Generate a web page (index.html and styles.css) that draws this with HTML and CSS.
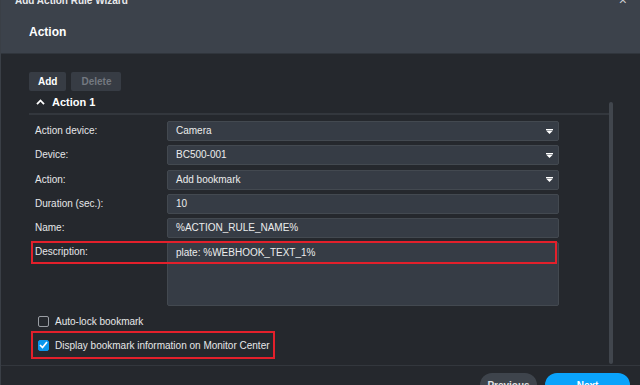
FILE: index.html
```html
<!DOCTYPE html>
<html lang="en">
<head>
  <meta charset="UTF-8">
  <meta name="viewport" content="width=device-width, initial-scale=1.0">
  <title>Add Action Rule Wizard</title>
  <link rel="stylesheet" href="styles.css">
</head>
<body>

  <div class="wizard">
    <div class="titlebar">
      <span>Add Action Rule Wizard</span>
      <span class="close">&times;</span>
    </div>

    <div class="step-head">Action</div>

    <div class="content">
      <div class="main">
        <div class="toolbar">
          <button class="btn">Add</button>
          <button class="btn disabled">Delete</button>
        </div>

        <div class="section-head">
          <svg class="chevron" width="9" height="6" viewBox="0 0 9 6">
            <polyline points="1,5.2 4.5,1.5 8,5.2" fill="none" stroke="#ffffff" stroke-width="1.8"/>
          </svg>
          <span>Action 1</span>
        </div>

        <div class="form">
          <div class="row">
            <label>Action device:</label>
            <div class="field select">Camera<svg class="caret" width="7" height="5" viewBox="0 0 7 5"><rect x="0" y="0" width="7" height="1" fill="#fff"/><polygon points="0,1.5 7,1.5 3.5,5" fill="#fff"/></svg></div>
          </div>
          <div class="row">
            <label>Device:</label>
            <div class="field select">BC500-001<svg class="caret" width="7" height="5" viewBox="0 0 7 5"><rect x="0" y="0" width="7" height="1" fill="#fff"/><polygon points="0,1.5 7,1.5 3.5,5" fill="#fff"/></svg></div>
          </div>
          <div class="row">
            <label>Action:</label>
            <div class="field select">Add bookmark<svg class="caret" width="7" height="5" viewBox="0 0 7 5"><rect x="0" y="0" width="7" height="1" fill="#fff"/><polygon points="0,1.5 7,1.5 3.5,5" fill="#fff"/></svg></div>
          </div>
          <div class="row">
            <label>Duration (sec.):</label>
            <div class="field">10</div>
          </div>
          <div class="row">
            <label>Name:</label>
            <div class="field">%ACTION_RULE_NAME%</div>
          </div>
          <div class="row">
            <label>Description:</label>
            <div class="field textarea">plate: %WEBHOOK_TEXT_1%</div>
            <div class="highlight"></div>
          </div>
        </div>

        <div class="check-row">
          <span class="checkbox"></span>
          <span>Auto-lock bookmark</span>
        </div>
        <div class="check-row boxed">
          <span class="checkbox checked">
            <svg width="9" height="8" viewBox="0 0 9 8"><polyline points="1,4 3.5,6.5 8,1" fill="none" stroke="#fff" stroke-width="1.7"/></svg>
          </span>
          <span>Display bookmark information on Monitor Center</span>
        </div>
      </div>
      <div class="scrollbar"></div>
    </div>

    <div class="footer">
      <button class="pill">Previous</button>
      <button class="pill primary">Next</button>
    </div>
  </div>

</body>
</html>
```

FILE: styles.css
```css
* {
  margin: 0;
  padding: 0;
  box-sizing: border-box;
}

body, html {
  height: 100%;
  overflow: hidden;
  background-color: #25282d;
  font-family: 'Liberation Sans', Arial, sans-serif;
  color: #e6e7e9;
}

.wizard {
  width: 640px;
  margin-top: -10px;
  display: flex;
  flex-direction: column;
  border-left: 1px solid #3a3f46;
}

.wizard > * {
  flex-shrink: 0;
}

.titlebar {
  height: 20px;
  background-color: #3c424b;
  display: flex;
  justify-content: space-between;
  align-items: center;
  padding: 0 13px 0 14px;
  font-size: 10px;
  font-weight: bold;
  color: #e8e9eb;
}

.close {
  font-size: 14px;
  font-weight: normal;
  color: #c9ccd0;
}

.step-head {
  height: 44px;
  background-color: #3c424b;
  padding-left: 28px;
  display: flex;
  align-items: center;
  font-size: 12px;
  font-weight: bold;
  color: #ffffff;
  border-bottom: 1px solid #30353c;
}

.content {
  height: 311px;
  display: flex;
  padding: 18px 0 0 28px;
}

.main {
  width: 580px;
}

.scrollbar {
  width: 4px;
  height: 262px;
  margin-top: 30px;
  background-color: #41464d;
  border-radius: 2px;
}

.toolbar {
  display: flex;
  gap: 5px;
}

.btn {
  height: 19px;
  padding: 0 9px;
  border: none;
  border-radius: 2px;
  background-color: #373c44;
  color: #ffffff;
  font-family: inherit;
  font-size: 10px;
  font-weight: bold;
}

.btn.disabled {
  color: #737880;
  padding: 0 10px;
}

.section-head {
  height: 24px;
  display: flex;
  align-items: center;
  gap: 7px;
  padding-left: 7px;
  font-size: 11px;
  font-weight: bold;
  color: #ffffff;
  border-bottom: 2px solid #33373d;
  margin-right: -4px;
}

.form {
  display: flex;
  flex-direction: column;
  gap: 4.25px;
  padding-top: 6px;
}

.row {
  display: flex;
  position: relative;
}

.row label {
  width: 138px;
  padding-left: 6px;
  font-size: 10px;
  line-height: 20px;
  color: #e6e7e9;
}

.field {
  width: 392px;
  height: 20px;
  background-color: #363c45;
  border: 1px solid #434950;
  border-radius: 2px;
  padding-left: 8px;
  font-size: 10px;
  line-height: 18px;
  color: #eceded;
  display: flex;
  align-items: center;
}

.select {
  justify-content: space-between;
  padding-right: 5px;
}

.caret {
  display: block;
}

.textarea {
  height: 64px;
  align-items: flex-start;
  padding-top: 1px;
}

.highlight {
  position: absolute;
  left: 2px;
  top: -1px;
  width: 526px;
  height: 23px;
  border: 2px solid #e3202b;
}

.check-row {
  display: flex;
  align-items: center;
  gap: 6px;
  font-size: 10px;
  color: #e6e7e9;
}

.check-row:not(.boxed) {
  margin-top: 9px;
  margin-left: 9px;
  height: 12px;
}

.boxed {
  width: 244px;
  height: 28px;
  margin-top: 4px;
  margin-left: 2px;
  padding-left: 5px;
  border: 2px solid #e3202b;
}

.checkbox {
  width: 11px;
  height: 11px;
  border: 1px solid #9a9ea4;
  border-radius: 2px;
  display: flex;
  align-items: center;
  justify-content: center;
}

.checkbox.checked {
  background-color: #0a96ec;
  border-color: #0a96ec;
}

.footer {
  height: 20px;
  overflow: hidden;
  border-top: 1px solid #33373d;
  display: flex;
  justify-content: flex-end;
  align-items: flex-start;
  gap: 8px;
  padding: 7px 10px 0 0;
}

.pill {
  height: 25px;
  flex-shrink: 0;
  border: none;
  border-radius: 12px;
  background-color: #3e444c;
  color: #e0e2e4;
  font-family: inherit;
  font-size: 10px;
  font-weight: bold;
  width: 57px;
}

.pill.primary {
  width: 85px;
  background-color: #0aa3fb;
  color: #ffffff;
}
```
